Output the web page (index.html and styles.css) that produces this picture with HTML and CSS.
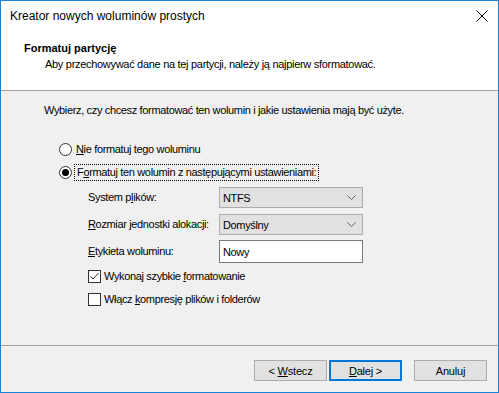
FILE: index.html
```html
<!DOCTYPE html>
<html lang="pl">
<head>
<meta charset="utf-8">
<title>Kreator nowych woluminów prostych</title>
<link rel="stylesheet" href="styles.css">
</head>
<body>
<div class="window">
  <div class="titlebar">
    <span class="title">Kreator nowych woluminów prostych</span>
    <svg class="close" width="12" height="12" viewBox="0 0 12 12"><path d="M0.5 0.5 L11.5 11.5 M11.5 0.5 L0.5 11.5" stroke="#000" stroke-width="1" fill="none"/></svg>
  </div>
  <div class="header">
    <div class="h-title">Formatuj partycję</div>
    <div class="h-sub">Aby przechowywać dane na tej partycji, należy ją najpierw sformatować.</div>
  </div>
  <div class="content">
    <p class="intro">Wybierz, czy chcesz formatować ten wolumin i jakie ustawienia mają być użyte.</p>
    <div class="option first">
      <span class="radio"></span>
      <span class="label"><u>N</u>ie formatuj tego woluminu</span>
    </div>
    <div class="option second">
      <span class="radio checked"></span>
      <span class="label focus">F<u>o</u>rmatuj ten wolumin z następującymi ustawieniami:</span>
    </div>
    <div class="form">
      <span class="flabel">System p<u>l</u>ików:</span>
      <div class="select"><span>NTFS</span><svg class="chev" width="9" height="5" viewBox="0 0 9 5"><path d="M0.5 0.5 L4.5 4.5 L8.5 0.5" stroke="#606060" fill="none"/></svg></div>
      <span class="flabel"><u>R</u>ozmiar jednostki alokacji:</span>
      <div class="select"><span>Domyślny</span><svg class="chev" width="9" height="5" viewBox="0 0 9 5"><path d="M0.5 0.5 L4.5 4.5 L8.5 0.5" stroke="#606060" fill="none"/></svg></div>
      <span class="flabel"><u>E</u>tykieta woluminu:</span>
      <div class="textbox">Nowy</div>
    </div>
    <div class="check first">
      <span class="box"><svg width="11" height="11" viewBox="0 0 11 11"><path d="M1.5 5.5 L4 8 L9.5 2" stroke="#333" stroke-width="1" fill="none"/></svg></span>
      <span class="label">Wykonaj szybkie <u>f</u>ormatowanie</span>
    </div>
    <div class="check">
      <span class="box"></span>
      <span class="label">Włącz <u>k</u>ompresję plików i folderów</span>
    </div>
  </div>
  <div class="footer">
    <button class="btn">&lt; <u>W</u>stecz</button>
    <button class="btn default"><u>D</u>alej &gt;</button>
    <button class="btn cancel">Anuluj</button>
  </div>
</div>
</body>
</html>
```

FILE: styles.css
```css
* { box-sizing: border-box; }
html, body { margin: 0; padding: 0; }
body {
  width: 499px;
  height: 393px;
  font-family: "Liberation Sans", Arial, sans-serif;
  font-size: 11px;
  color: #000;
  background: #f0f0f0;
}
.window {
  width: 499px;
  height: 393px;
  border: 1px solid #1883d7;
  display: flex;
  flex-direction: column;
  background: #f0f0f0;
}
.titlebar {
  height: 29px;
  background: #fff;
  display: flex;
  align-items: center;
  justify-content: space-between;
  padding: 0 10px 0 9px;
}
.title {
  font-size: 12px;
  color: #000;
  padding-top: 1px;
}
.header {
  height: 61px;
  background: #fff;
  border-bottom: 1px solid #a0a0a0;
  padding: 12px 0 0 23px;
}
.h-title {
  font-weight: bold;
  line-height: 13px;
  height: 13px;
}
.h-sub {
  padding-left: 21px;
  margin-top: 3px;
  line-height: 13px;
  letter-spacing: -0.3px;
}
.content {
  height: 255px;
  border-bottom: 1px solid #a0a0a0;
  padding: 13px 0 0 43px;
  letter-spacing: -0.35px;
}
.intro {
  margin: 0;
  line-height: 13px;
}
.option {
  display: flex;
  align-items: center;
  margin-left: 15px;
  height: 17px;
}
.option.first { margin-top: 24px; }
.option.second { margin-top: 6px; }
.radio {
  width: 13px;
  height: 13px;
  border: 1px solid #333;
  border-radius: 50%;
  background: #fff;
  position: relative;
  margin-right: 4px;
  flex: none;
}
.radio.checked::after {
  content: "";
  position: absolute;
  left: 2px;
  top: 2px;
  width: 7px;
  height: 7px;
  border-radius: 50%;
  background: #000;
}
.label { line-height: 13px; }
.focus {
  outline: 1px dotted #000;
  outline-offset: 1px;
  padding: 0 1px;
}
.form {
  display: grid;
  grid-template-columns: 131px 144px;
  grid-auto-rows: 21px;
  row-gap: 6px;
  margin: 6px 0 0 44px;
  align-items: center;
}
.form .textbox { height: 23px; }
.flabel { line-height: 13px; }
.select {
  height: 21px;
  background: #e1e1e1;
  border: 1px solid #adadad;
  display: flex;
  align-items: center;
  justify-content: space-between;
  padding: 0 6px 0 3px;
}
.textbox {
  background: #fff;
  border: 1px solid #7a7a7a;
  display: flex;
  align-items: center;
  padding: 0 3px;
}
.check {
  display: flex;
  align-items: center;
  margin-left: 44px;
  height: 17px;
  margin-top: 6px;
}
.check.first { margin-top: 6px; }
.box {
  width: 13px;
  height: 13px;
  border: 1px solid #333;
  background: #fff;
  margin-right: 3px;
  flex: none;
  display: flex;
  align-items: center;
  justify-content: center;
}
.box svg { display: block; }
.footer {
  flex: 1;
  display: flex;
  align-items: flex-start;
  padding: 14px 0 0 253px;
}
.btn {
  width: 73px;
  height: 21px;
  background: #e1e1e1;
  border: 1px solid #adadad;
  font-family: inherit;
  font-size: 11px;
  letter-spacing: -0.2px;
  color: #000;
  padding: 0;
  margin: 0;
}
.btn.default {
  margin-left: 2px;
  border: 2px solid #0078d7;
}
.btn.cancel { margin-left: 12px; }
```
